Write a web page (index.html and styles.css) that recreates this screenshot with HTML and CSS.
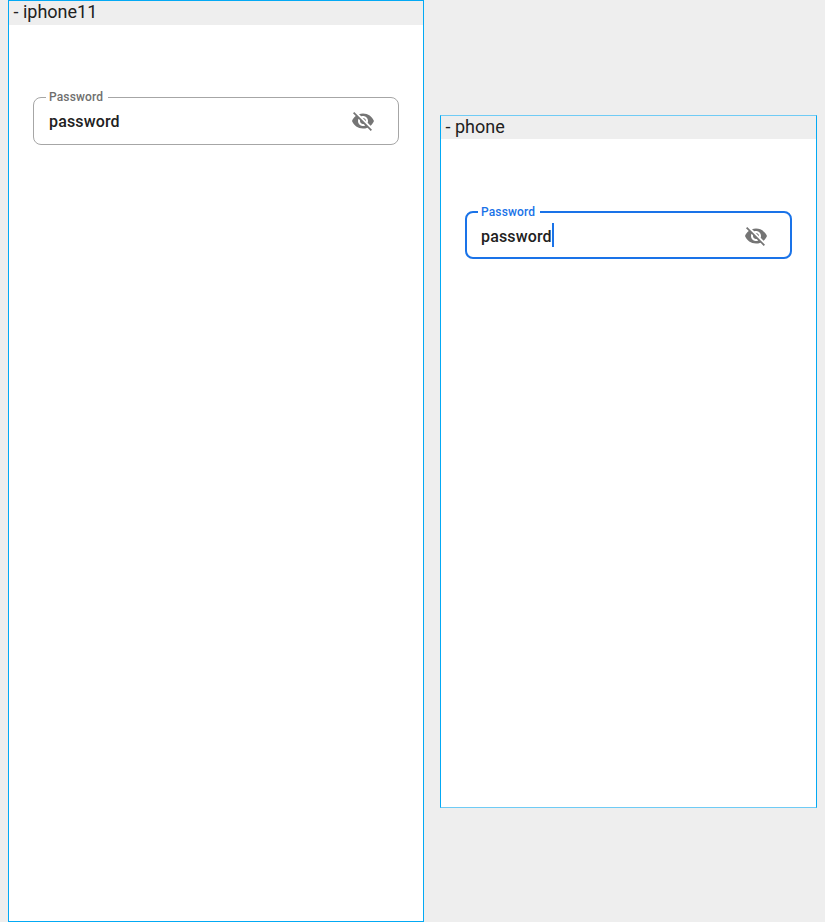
FILE: index.html
```html
<!DOCTYPE html>
<html lang="en">
<head>
<meta charset="utf-8">
<title>Password field</title>
<link rel="stylesheet" href="styles.css">
</head>
<body>
<svg class="sprite" aria-hidden="true"><symbol id="eye-off" viewBox="0 0 24 24"><path d="M12 7c2.76 0 5 2.24 5 5 0 .65-.13 1.26-.36 1.83l2.92 2.92c1.51-1.26 2.7-2.89 3.43-4.75-1.73-4.39-6-7.5-11-7.5-1.4 0-2.74.25-3.98.7l2.16 2.16C10.74 7.13 11.35 7 12 7zM2 4.27l2.28 2.28.46.46C3.08 8.3 1.78 10.02 1 12c1.73 4.39 6 7.5 11 7.5 1.55 0 3.03-.3 4.38-.84l.42.42L19.73 22 21 20.73 3.27 3 2 4.27zM7.53 9.8l1.55 1.55c-.05.21-.08.43-.08.65 0 1.66 1.34 3 3 3 .22 0 .44-.03.65-.08l1.55 1.55c-.67.33-1.41.53-2.2.53-2.76 0-5-2.24-5-5 0-.79.2-1.53.53-2.2zm4.31-.78l3.15 3.15.02-.16c0-1.66-1.34-3-3-3l-.17.01z"/></symbol></svg>
<main class="devices">
  <section class="device iphone">
    <h2 class="title">- iphone11</h2>
    <div class="field">
      <span class="label">Password</span>
      <span class="value">password</span>
      <svg class="icon"><use href="#eye-off"/></svg>
    </div>
  </section>
  <section class="device phone">
    <h2 class="title">- phone</h2>
    <div class="field focused">
      <span class="label">Password</span>
      <span class="value">password</span><span class="caret"></span>
      <svg class="icon"><use href="#eye-off"/></svg>
    </div>
  </section>
</main>
</body>
</html>
```
FILE: styles.css
```css
* { box-sizing: border-box; }
body { margin: 0; background: #eee; font-family: Roboto, sans-serif; color: #212121; }
.sprite { display: none; }
.devices { display: flex; align-items: center; gap: 16px; height: 922px; padding-left: 8px; }
.device { background: #fff; border: 1px solid #03a9f4; }
.iphone { width: 416px; height: 922px; }
.phone { width: 377px; height: 693px; border-top-color: #6fcbf5; border-bottom-color: #6fcbf5; }
.title { margin: 0; height: 24px; padding-left: 4.5px; background: #eee; font-size: 18px; line-height: 22px; font-weight: 400; }
.phone .title { height: 23px; }
.field { position: relative; display: flex; align-items: center; height: 48px; margin: 72px 24px 0; padding: 0 23px 0 15px; border: 1px solid #a6a6a6; border-radius: 8px; }
.focused { border: 2px solid #1a73e8; padding: 0 22px 0 14px; }
.label { position: absolute; left: 12px; top: -8px; padding: 0 5px 0 3px; background: #fff; color: #6f6f6f; font-size: 12px; line-height: 14px; font-weight: 500; letter-spacing: .15px; }
.focused .label { left: 11px; top: -8px; color: #1a73e8; }
.value { padding-top: 2px; font-size: 16px; line-height: 24px; font-weight: 500; letter-spacing: .15px; }
.focused .value { padding-top: 4px; }
.caret { width: 2px; height: 24px; background: #1a73e8; }
.icon { width: 24px; height: 24px; margin-left: auto; fill: #757575; }
.focused .icon { margin-top: 2px; }
```
